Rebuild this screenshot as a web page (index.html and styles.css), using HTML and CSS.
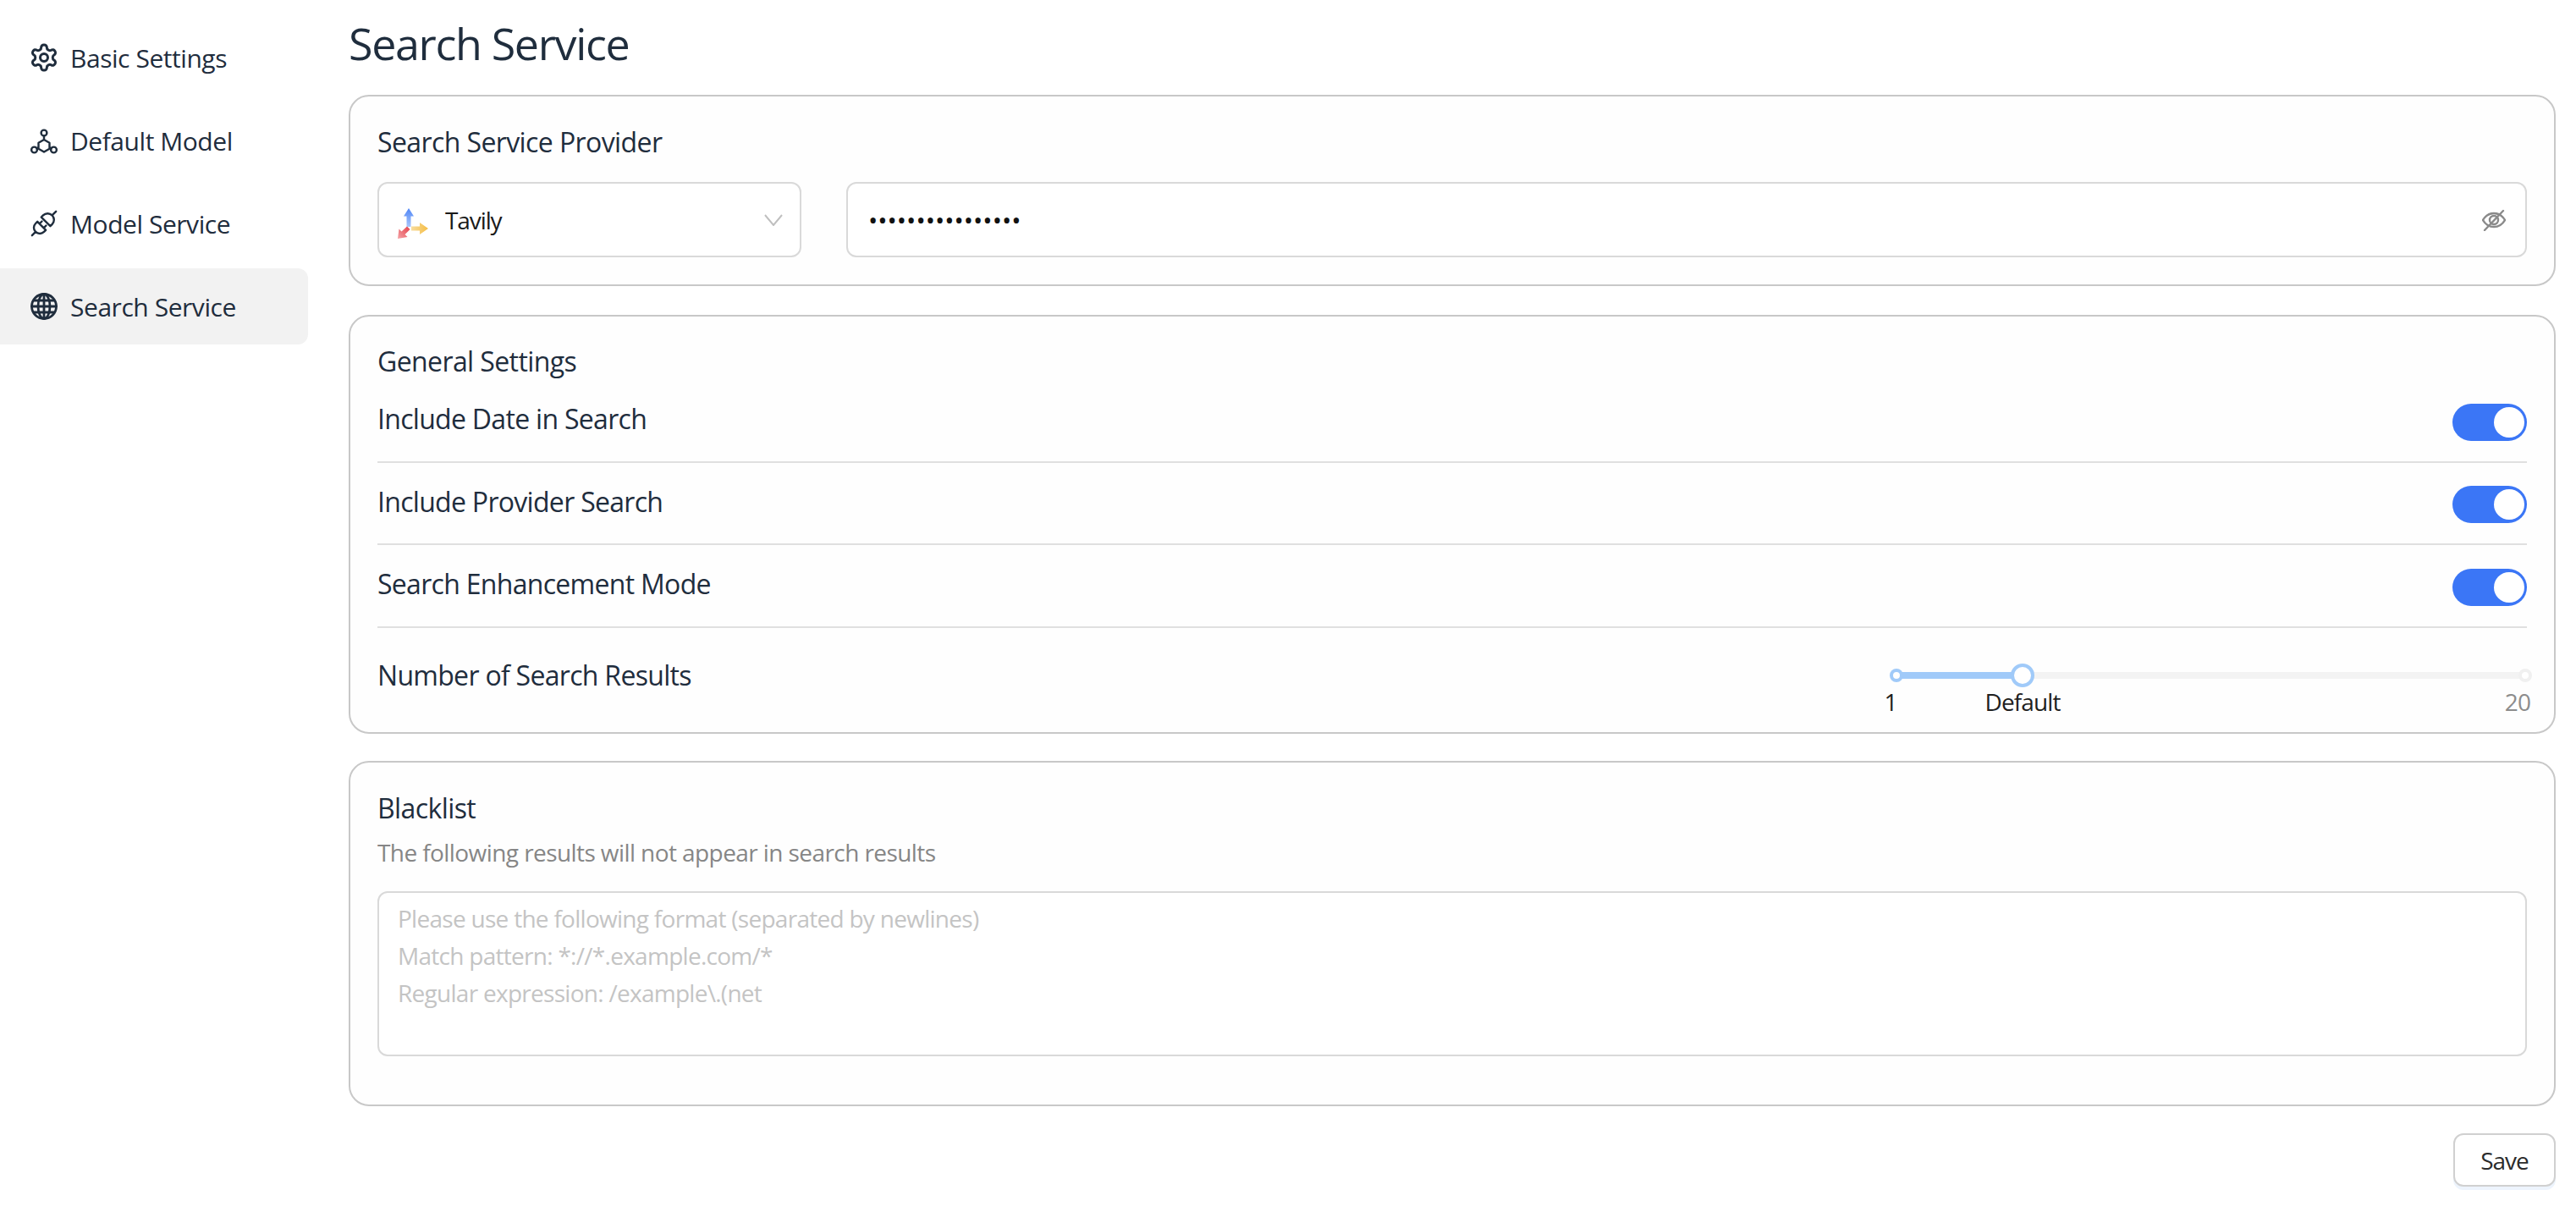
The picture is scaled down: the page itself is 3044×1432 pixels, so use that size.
FILE: index.html
```html
<!DOCTYPE html>
<html lang="en">
<head>
<meta charset="utf-8">
<title>Search Service</title>
<link rel="stylesheet" href="styles.css">
</head>
<body>
<div class="app">
  <nav class="sidebar">
    <a class="nav-item">
      <svg class="nav-icon" viewBox="0 0 24 24"><path d="M12.22 2h-.44a2 2 0 0 0-2 2v.18a2 2 0 0 1-1 1.73l-.43.25a2 2 0 0 1-2 0l-.15-.08a2 2 0 0 0-2.73.73l-.22.38a2 2 0 0 0 .73 2.73l.15.1a2 2 0 0 1 1 1.72v.51a2 2 0 0 1-1 1.74l-.15.09a2 2 0 0 0-.73 2.73l.22.38a2 2 0 0 0 2.73.73l.15-.08a2 2 0 0 1 2 0l.43.25a2 2 0 0 1 1 1.73V20a2 2 0 0 0 2 2h.44a2 2 0 0 0 2-2v-.18a2 2 0 0 1 1-1.73l.43-.25a2 2 0 0 1 2 0l.15.08a2 2 0 0 0 2.73-.73l.22-.39a2 2 0 0 0-.73-2.73l-.15-.08a2 2 0 0 1-1-1.74v-.5a2 2 0 0 1 1-1.74l.15-.09a2 2 0 0 0 .73-2.73l-.22-.38a2 2 0 0 0-2.73-.73l-.15.08a2 2 0 0 1-2 0l-.43-.25a2 2 0 0 1-1-1.73V4a2 2 0 0 0-2-2z"/><circle cx="12" cy="12" r="3"/></svg>
      <span>Basic Settings</span>
    </a>
    <a class="nav-item">
      <svg class="nav-icon thin" viewBox="0 0 36 36"><circle cx="18" cy="9" r="3.4"/><circle cx="6.500" cy="29" r="3.4"/><circle cx="29.500" cy="29" r="3.4"/><path d="M18 12.500v4.500M18 17l6.500 3.700v7L18 31.500l-6.500-3.800v-7zM9.500 27.300l2-1.200M26.500 27.300l-2-1.200"/></svg>
      <span>Default Model</span>
    </a>
    <a class="nav-item">
      <svg class="nav-icon thin" viewBox="0 0 36 36"><g transform="rotate(-45 18 18)"><path d="M-2 18h6M4 18c0-4 3-7 7-7h3v14h-3c-4 0-7-3-7-7zM14 14.500h4M14 21.500h4"/><path d="M21 10.500h3c4.500 0 7.500 3.500 7.500 7.500s-3 7.500-7.500 7.500h-3zM31.500 18H38"/></g></svg>
      <span>Model Service</span>
    </a>
    <a class="nav-item active">
      <svg class="nav-icon wide" viewBox="0 0 36 36"><circle cx="18" cy="18" r="14.500"/><ellipse cx="18" cy="18" rx="7" ry="14.500"/><path d="M18 3.500v29M3.500 18h29M6 11h24M6 25h24"/></svg>
      <span>Search Service</span>
    </a>
  </nav>

  <main class="content">
    <h1 class="page-title">Search Service</h1>

    <section class="card provider-card">
      <h2 class="card-title">Search Service Provider</h2>
      <div class="provider-row">
        <div class="select">
          <svg class="tavily-logo" viewBox="0 0 36 36">
            <defs>
              <linearGradient id="tvb" x1="0" y1="0" x2="0" y2="1"><stop offset="0" stop-color="#4f86f7"/><stop offset="1" stop-color="#a9c6fb"/></linearGradient>
              <linearGradient id="tvy" x1="0" y1="0" x2="1" y2="0"><stop offset="0" stop-color="#f8dc9c"/><stop offset="1" stop-color="#f5bd45"/></linearGradient>
              <linearGradient id="tvr" x1="1" y1="0" x2="0" y2="1"><stop offset="0" stop-color="#e5404a"/><stop offset="1" stop-color="#f4a3a6"/></linearGradient>
            </defs>
            <path fill="url(#tvb)" d="M13 0l6 9.500h-3.500V22h-5V9.500H7z"/>
            <path fill="url(#tvy)" d="M16 21.500h10V17l10 7-10 7v-4.500H16z"/>
            <path fill="url(#tvr)" d="M11 21.500l3.500 3.500-6 6 3 3L0 36l1.500-11.500 3 3z"/>
          </svg>
          <span class="select-value">Tavily</span>
          <svg class="chevron" viewBox="0 0 22 14"><path d="M1 1l10 12L21 1"/></svg>
        </div>
        <div class="key-input">
          <input class="key-field" type="password" value="tvly-abcdefghijk" aria-label="API key">
          <svg class="eye" viewBox="0 0 28 26"><path d="M1 13c3-5 7.500-8 13-8s10 3 13 8c-3 5-7.500 8-13 8S4 18 1 13z"/><circle cx="14" cy="13" r="5"/><path d="M3 25L25 2"/></svg>
        </div>
      </div>
    </section>

    <section class="card general-card">
      <h2 class="card-title">General Settings</h2>
      <div class="setting-row">
        <span class="setting-label">Include Date in Search</span>
        <span class="switch"><span class="knob"></span></span>
      </div>
      <div class="setting-row">
        <span class="setting-label">Include Provider Search</span>
        <span class="switch"><span class="knob"></span></span>
      </div>
      <div class="setting-row">
        <span class="setting-label">Search Enhancement Mode</span>
        <span class="switch"><span class="knob"></span></span>
      </div>
      <div class="setting-row last">
        <span class="setting-label">Number of Search Results</span>
        <div class="slider">
          <div class="rail"></div>
          <div class="track"></div>
          <span class="dot dot-start"></span>
          <span class="dot dot-end"></span>
          <span class="handle"></span>
          <span class="mark mark-start">1</span>
          <span class="mark mark-default">Default</span>
          <span class="mark mark-end">20</span>
        </div>
      </div>
    </section>

    <section class="card blacklist-card">
      <h2 class="card-title">Blacklist</h2>
      <p class="card-desc">The following results will not appear in search results</p>
      <textarea class="blacklist-input" aria-label="Blacklist" placeholder="Please use the following format (separated by newlines)
Match pattern: *://*.example.com/*
Regular expression: /example\.(net"></textarea>
    </section>

    <div class="actions"><button class="save" type="button">Save</button></div>
  </main>
</div>
</body>
</html>
```
FILE: styles.css
```css
* { box-sizing: border-box; }
html, body { margin: 0; padding: 0; background: #fff; }
body {
  font-family: "Open Sans", "Noto Sans", sans-serif;
  color: #1f2d3d;
  font-size: 28px;
}
.app { display: flex; height: 1432px; overflow: hidden; }
.sidebar {
  width: 364px;
  flex: none;
  padding-top: 23px;
  display: flex;
  flex-direction: column;
  gap: 8px;
}
.nav-item {
  height: 90px;
  display: flex;
  align-items: center;
  gap: 13px;
  padding-left: 34px;
  border-radius: 0 12px 12px 0;
  font-size: 30px;
  letter-spacing: -0.45px;
}
.nav-item.active { background: #f2f2f2; }
.nav-icon {
  width: 36px;
  height: 36px;
  fill: none;
  stroke: #1f2d3d;
  stroke-width: 2;
  stroke-linecap: round;
  stroke-linejoin: round;
  flex: none;
  overflow: visible;
}
.nav-icon.wide { stroke-width: 2.800; }
.nav-icon.thin { stroke-width: 2.400; }
.content {
  margin-left: 48px;
  width: 2608px;
  flex: none;
}
.page-title {
  margin: 0;
  height: 112px;
  padding-top: 16px;
  font-size: 52px;
  font-weight: 400;
  line-height: 70px;
  letter-spacing: -1.36px;
}
.card {
  border: 2px solid #c8c8c8;
  border-radius: 24px;
  padding: 32px;
  margin-bottom: 34px;
  background: #fefefe;
}
.card-title {
  margin: 0;
  font-size: 32px;
  font-weight: 400;
  line-height: 44px;
  letter-spacing: -0.6px;
}
.provider-card { height: 226px; }
.provider-row {
  display: flex;
  gap: 53px;
  margin-top: 25px;
}
.select, .key-input {
  height: 89px;
  border: 2px solid #d9d9d9;
  border-radius: 12px;
  display: flex;
  align-items: center;
  background: #fff;
}
.select {
  width: 501px;
  flex: none;
  padding: 0 20px 0 22px;
}
.tavily-logo { width: 36px; height: 36px; flex: none; margin-top: 8px; }
.select-value {
  margin-left: 20px;
  flex: 1;
  color: #1a1a1a;
  font-size: 28px;
  letter-spacing: -1.1px;
}
.chevron {
  width: 22px;
  height: 14px;
  fill: none;
  stroke: #bfbfbf;
  stroke-width: 2;
}
.key-input { flex: 1; padding: 0 24px; }
.key-field {
  flex: 1;
  border: 0;
  outline: 0;
  background: transparent;
  font: 30px "Open Sans", sans-serif;
  color: #111;
  padding: 0;
  letter-spacing: 0;
}
.eye {
  width: 28px;
  height: 26px;
  fill: none;
  stroke: #8a8a8a;
  stroke-width: 2.400;
  stroke-linecap: round;
  flex: none;
  margin-right: -1px;
}
.general-card { height: 495px; padding-bottom: 0; margin-bottom: 32px; }
.general-card .card-title { margin-top: -1px; }
.setting-row {
  height: 97.500px;
  display: flex;
  align-items: center;
  justify-content: space-between;
  border-bottom: 2px solid #e0e0e0;
}
.setting-row.last { border-bottom: 0; height: 114px; align-items: flex-start; padding-top: 35px; }
.setting-label {
  font-size: 32px;
  letter-spacing: -0.7px;
  line-height: 40px;
  margin-top: -3px;
}
.setting-row.last .setting-label { margin-top: 1px; }
.switch {
  width: 88px;
  height: 44px;
  border-radius: 22px;
  background: #3b76f6;
  position: relative;
  margin-top: 4px;
}
.knob {
  position: absolute;
  right: 3px;
  top: 4px;
  width: 36px;
  height: 36px;
  border-radius: 50%;
  background: #fff;
}
.slider {
  position: relative;
  width: 743px;
  height: 70px;
  margin-right: 2px;
}
.rail {
  position: absolute;
  left: 0;
  right: 0;
  top: 17px;
  height: 8px;
  background: #f3f3f3;
}
.track {
  position: absolute;
  left: 0;
  width: 149px;
  top: 17px;
  height: 8px;
  background: #a0caf9;
}
.dot {
  position: absolute;
  top: 13px;
  width: 16px;
  height: 16px;
  border-radius: 50%;
  background: #fff;
  border: 4px solid #a0caf9;
}
.dot-start { left: -8px; }
.dot-end { right: -8px; border-color: #f0f0f0; }
.handle {
  position: absolute;
  left: 135px;
  top: 7px;
  width: 28px;
  height: 28px;
  border-radius: 50%;
  background: #fff;
  border: 4px solid #a0caf9;
}
.mark {
  position: absolute;
  top: 34px;
  font-size: 28px;
  line-height: 36px;
  letter-spacing: -0.9px;
  transform: translateX(-50%);
  color: #1f1f1f;
}
.mark-start { left: -7px; }
.mark-default { left: 149px; }
.mark-end { left: auto; right: -6px; transform: none; color: #8c8c8c; }
.blacklist-card { height: 408px; padding-top: 32px; margin-bottom: 32px; }
.card-desc {
  margin: 8px 0 0;
  font-size: 28px;
  line-height: 44px;
  letter-spacing: -0.58px;
  color: #868686;
}
.blacklist-input {
  display: block;
  width: 100%;
  height: 195px;
  margin-top: 24px;
  padding: 8px 22px;
  border: 2px solid #d9d9d9;
  border-radius: 12px;
  outline: 0;
  resize: none;
  font: 28px/44px "Open Sans", sans-serif;
  letter-spacing: -0.72px;
  background: #fff;
}
.blacklist-input::placeholder { color: #c4c4c4; opacity: 1; }
.actions { display: flex; justify-content: flex-end; }
.save {
  width: 121px;
  height: 63px;
  background: #fff;
  border: 2px solid #d0d0d0;
  border-radius: 12px;
  box-shadow: 0 4px 0 #edf4fd;
  font: 28px "Open Sans", sans-serif;
  letter-spacing: -1px;
  color: #2b2b2b;
  padding: 0;
}
```
